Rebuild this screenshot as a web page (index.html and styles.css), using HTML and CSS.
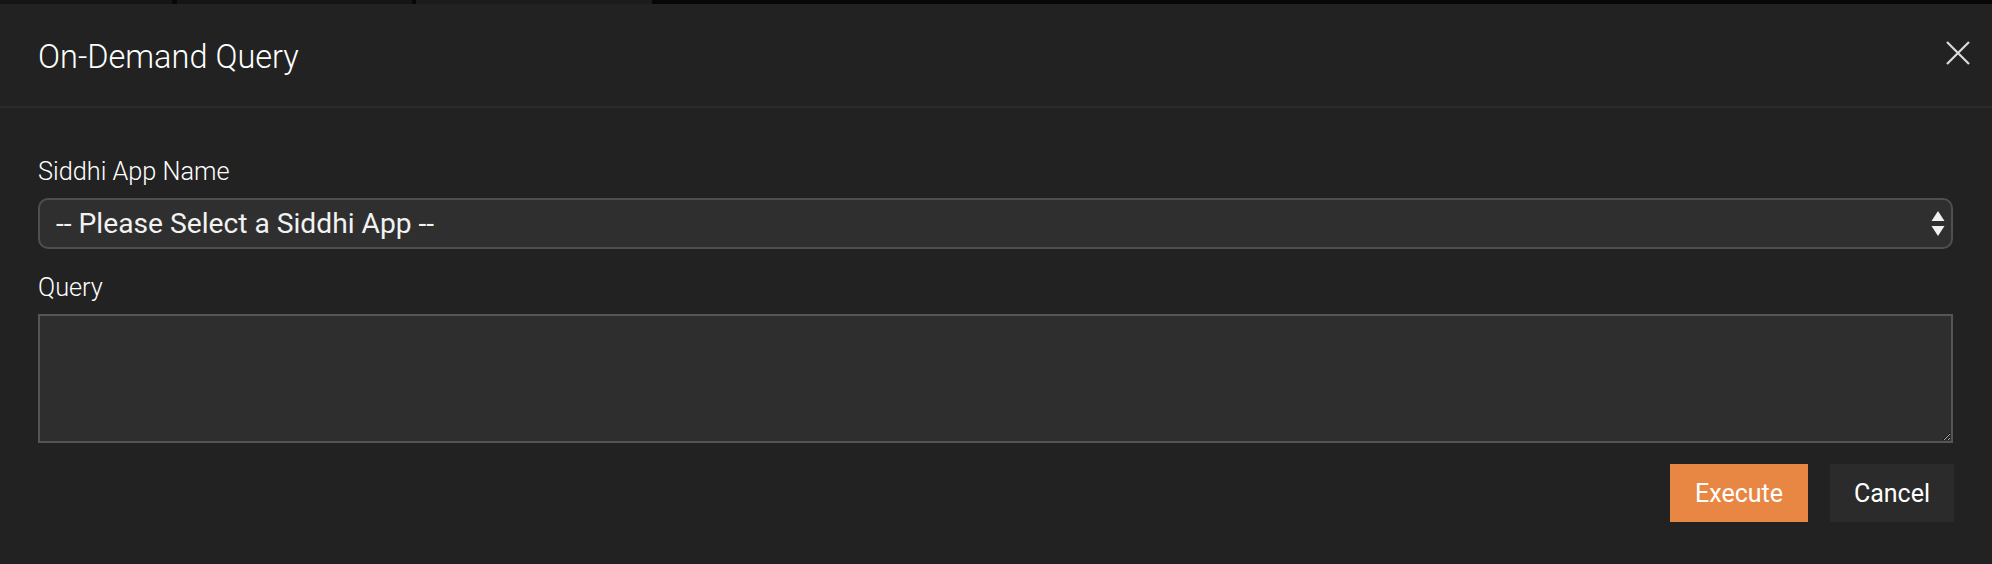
FILE: index.html
```html
<!DOCTYPE html>
<html lang="en">
<head>
<meta charset="utf-8">
<title>On-Demand Query</title>
<link rel="stylesheet" href="styles.css">
</head>
<body>
<div class="topstrip">
  <span class="seg seg-a"></span>
  <span class="seg seg-b"></span>
  <span class="seg seg-c"></span>
</div>
<div class="modal">
  <div class="modal-header">
    <h4 class="modal-title">On-Demand Query</h4>
    <button class="close" type="button" aria-label="Close">
      <svg width="24" height="24" viewBox="0 0 24 24"><path d="M1 1L23 23M23 1L1 23" stroke="#dcdcdc" stroke-width="2.2" fill="none"/></svg>
    </button>
  </div>
  <div class="modal-body">
    <label class="field-label" for="app">Siddhi App Name</label>
    <div class="select-wrap">
      <select id="app" class="select">
        <option>-- Please Select a Siddhi App --</option>
      </select>
      <svg class="select-arrows" width="14" height="26" viewBox="0 0 14 26"><path d="M7 0L13.5 10H0.5Z M0.5 15H13.5L7 25Z" fill="#f0f0f0"/></svg>
    </div>
    <label class="field-label" for="query">Query</label>
    <textarea id="query" class="textarea"></textarea>
    <div class="actions">
      <button class="btn btn-primary" type="button">Execute</button>
      <button class="btn btn-default" type="button">Cancel</button>
    </div>
  </div>
</div>
</body>
</html>
```
FILE: styles.css
```css
html, body {
  margin: 0;
  padding: 0;
  background: #222222;
  width: 1992px;
  height: 564px;
  overflow: hidden;
  font-family: Roboto, "Liberation Sans", sans-serif;
  color: #ffffff;
}

.topstrip {
  display: flex;
  height: 4px;
  background: #070707;
}
.seg { display: block; height: 4px; }
.seg-a { width: 172px; background: #141414; }
.seg-b { width: 235px; margin-left: 5px; background: #141414; }
.seg-c { width: 236px; margin-left: 4px; background: #1c1c1c; }

.modal-header {
  display: flex;
  align-items: center;
  justify-content: space-between;
  height: 102px;
  padding: 0 22px 0 38px;
  border-bottom: 2px solid #2b2b2b;
}
.modal-title {
  margin: 4px 0 0 0;
  font-size: 32.5px;
  font-weight: 300;
  line-height: 37px;
  color: #ffffff;
}
.close {
  display: flex;
  padding: 0;
  margin: 0 0 4px 0;
  border: 0;
  background: transparent;
  cursor: pointer;
}

.modal-body {
  display: flex;
  flex-direction: column;
  padding: 49px 39px 0 38px;
}
.field-label {
  display: block;
  font-size: 25.3px;
  font-weight: 300;
  line-height: 30px;
  margin-bottom: 11px;
  color: #ffffff;
}

.select-wrap {
  position: relative;
  margin-bottom: 24px;
}
.select {
  -webkit-appearance: none;
  appearance: none;
  display: block;
  width: 100%;
  height: 51px;
  box-sizing: border-box;
  margin: 0;
  padding: 0 40px 0 16px;
  border: 2px solid #4f4f4f;
  border-radius: 10px;
  background: #2f2f2f;
  color: #f2f2f2;
  font-family: Roboto, "Liberation Sans", sans-serif;
  font-size: 28.2px;
  font-weight: 400;
  outline: none;
}
.select-arrows {
  position: absolute;
  right: 8px;
  top: 13px;
  pointer-events: none;
}

.textarea {
  display: block;
  width: 100%;
  height: 129px;
  box-sizing: border-box;
  margin: 0;
  border: 2px solid #555555;
  border-radius: 0;
  background: #2e2e2e;
  color: #ffffff;
  font-family: Roboto, "Liberation Sans", sans-serif;
  font-size: 20px;
  resize: both;
  outline: none;
}

.actions {
  display: flex;
  justify-content: flex-end;
  gap: 22px;
  margin-top: 21px;
  margin-right: -1px;
}
.btn {
  height: 58px;
  border: 0;
  border-radius: 0;
  font-family: Roboto, "Liberation Sans", sans-serif;
  font-size: 25px;
  font-weight: 400;
  color: #ffffff;
  cursor: pointer;
}
.btn-primary {
  width: 138px;
  background: #e88744;
}
.btn-default {
  width: 124px;
  background: #2b2b2b;
}
```
